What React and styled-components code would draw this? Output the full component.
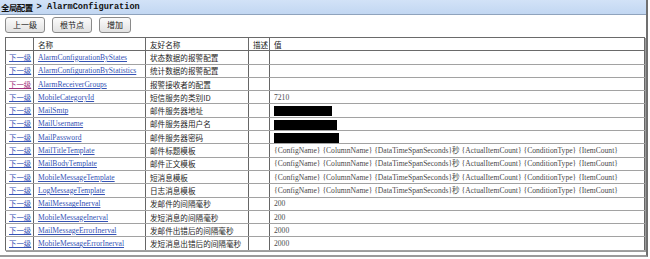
import React from "react";
import styled, { createGlobalStyle } from "styled-components";

const GlobalStyle = createGlobalStyle`
  html, body { margin: 0; padding: 0; background: #ffffff; }
  #root { width: 650px; }
`;

const Frame = styled.div`
  width: 646px;
  height: 255px;
  border-right: 2px solid #707070;
  border-bottom: 2px solid #9a9a9a;
  background: #ffffff;
`;

const TitleBar = styled.div`
  height: 14px;
  display: flex;
  align-items: center;
  padding-left: 1px;
  background: linear-gradient(#d2e2f7, #c2d7f2);
  border-bottom: 1px solid #8fa3bd;
  color: #111;
  font-weight: bold;
`;

const TitleCn = styled.span`
  font-family: "Noto Sans CJK SC", sans-serif;
  font-size: 8.5px;
  letter-spacing: -0.6px;
`;

const TitleEn = styled.span`
  font-family: "Liberation Mono", monospace;
  font-size: 8.6px;
  margin-left: 4px;
`;

const Toolbar = styled.div`
  display: flex;
  gap: 7px;
  padding: 2px 5px 0 5px;
  height: 16px;
`;

const Button = styled.button`
  width: ${(p) => p.$w}px;
  height: 16px;
  padding: 0;
  border: 1px solid #8a8a8a;
  border-radius: 3px;
  background: linear-gradient(#fbfbfb, #e2e2e2);
  font-family: "Noto Sans CJK SC", sans-serif;
  font-size: 8px;
  color: #222;
  line-height: 14px;
`;

const Table = styled.table`
  margin: 4px 0 0 5px;
  width: 640px;
  border-collapse: collapse;
  table-layout: fixed;
  border: 1px solid #3c3c3c;
  box-shadow: 1px 1px 0 #9c9c9c;
`;

const Th = styled.th`
  height: 13.3px;
  padding: 0 4px;
  box-sizing: border-box;
  border: 1px solid #6a6a6a;
  text-align: left;
  font-weight: normal;
  font-family: "Noto Sans CJK SC", sans-serif;
  font-size: 7.6px;
  color: #222;
  white-space: nowrap;
  overflow: hidden;
  line-height: 11px;
`;

const Td = styled.td`
  height: 13.3px;
  padding: 0 ${(p) => (p.$first ? 3 : 4)}px;
  box-sizing: border-box;
  border-top: 1px solid #a2a2a2;
  border-bottom: 1px solid #a2a2a2;
  border-left: 1px solid #666;
  border-right: 1px solid #666;
  font-family: ${(p) =>
    p.$cn
      ? `"Noto Sans CJK SC", sans-serif`
      : `"Liberation Serif", "Noto Sans CJK SC", serif`};
  font-size: 7.6px;
  color: ${(p) => (p.$cn ? "#1e1e1e" : "#4a4a4a")};
  white-space: nowrap;
  overflow: hidden;
  line-height: 11px;
`;

const Link = styled.a`
  color: ${(p) => (p.$visited ? "#a0307a" : "#3553b5")};
  text-decoration: underline;
  font-family: "Liberation Serif", "Noto Sans CJK SC", serif;
  font-size: ${(p) => (p.$small ? "7.4px" : "7.6px")};
`;

const Redacted = styled.span`
  display: inline-block;
  vertical-align: middle;
  width: ${(p) => p.$w}px;
  height: 10px;
  background: #000;
`;

const TEMPLATE =
  "{ConfigName} {ColumnName} {DataTimeSpanSeconds}秒 {ActualItemCount} {ConditionType} {ItemCount}";

const rows = [
  { name: "AlarmConfigurationByStates", friendly: "状态数据的报警配置", value: "" },
  { name: "AlarmConfigurationByStatistics", friendly: "统计数据的报警配置", value: "" },
  { name: "AlarmReceiverGroups", friendly: "报警接收者的配置", value: "", visited: true },
  { name: "MobileCategoryId", friendly: "短信服务的类别ID", value: "7210" },
  { name: "MailSmtp", friendly: "邮件服务器地址", redact: 58 },
  { name: "MailUsername", friendly: "邮件服务器用户名", redact: 63 },
  { name: "MailPassword", friendly: "邮件服务器密码", redact: 65 },
  { name: "MailTitleTemplate", friendly: "邮件标题模板", value: TEMPLATE },
  { name: "MailBodyTemplate", friendly: "邮件正文模板", value: TEMPLATE },
  { name: "MobileMessageTemplate", friendly: "短消息模板", value: TEMPLATE },
  { name: "LogMessageTemplate", friendly: "日志消息模板", value: TEMPLATE },
  { name: "MailMessageInerval", friendly: "发邮件的间隔毫秒", value: "200" },
  { name: "MobileMessageInerval", friendly: "发短消息的间隔毫秒", value: "200" },
  { name: "MailMessageErrorInerval", friendly: "发邮件出错后的间隔毫秒", value: "2000" },
  { name: "MobileMessageErrorInerval", friendly: "发短消息出错后的间隔毫秒", value: "2000" },
];

export default function App() {
  return (
    <>
      <GlobalStyle />
      <Frame>
        <TitleBar>
          <TitleCn>全局配置</TitleCn>
          <TitleEn>&gt; AlarmConfiguration</TitleEn>
        </TitleBar>
        <Toolbar>
          <Button $w={40}>上一级</Button>
          <Button $w={40}>根节点</Button>
          <Button $w={32}>增加</Button>
        </Toolbar>
        <Table>
          <colgroup>
            <col style={{ width: 28 }} />
            <col style={{ width: 112 }} />
            <col style={{ width: 103 }} />
            <col style={{ width: 21 }} />
            <col />
          </colgroup>
          <thead>
            <tr>
              <Th></Th>
              <Th>名称</Th>
              <Th>友好名称</Th>
              <Th>描述</Th>
              <Th>值</Th>
            </tr>
          </thead>
          <tbody>
            {rows.map((r) => (
              <tr key={r.name}>
                <Td $first>
                  <Link href="#" $small $visited={r.visited}>
                    下一级
                  </Link>
                </Td>
                <Td>
                  <Link href="#">{r.name}</Link>
                </Td>
                <Td $cn>{r.friendly}</Td>
                <Td></Td>
                <Td>{r.redact ? <Redacted $w={r.redact} /> : r.value}</Td>
              </tr>
            ))}
          </tbody>
        </Table>
      </Frame>
    </>
  );
}
